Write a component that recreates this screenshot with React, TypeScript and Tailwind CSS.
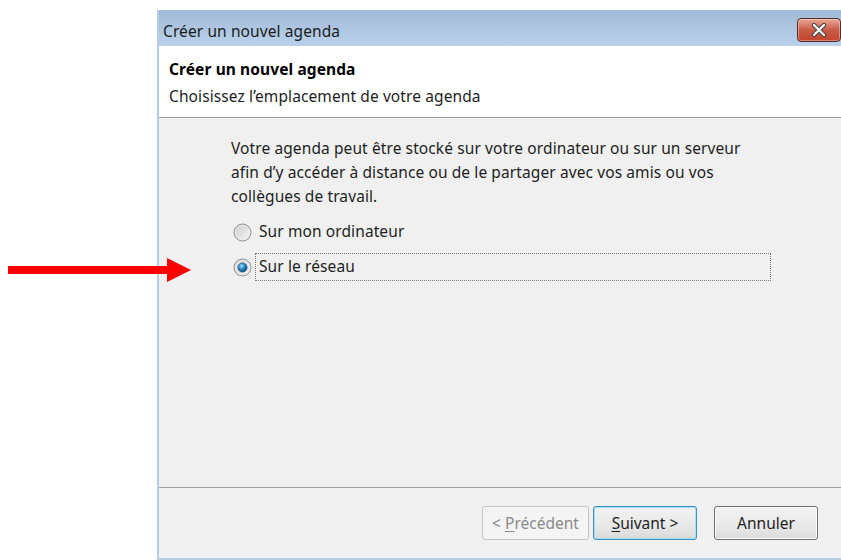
import React from "react";

const font = { fontFamily: '"Noto Sans", "Segoe UI", sans-serif' };

function Radio({ checked }: { checked?: boolean }) {
  return (
    <svg width="19" height="19" viewBox="0 0 19 19" className="shrink-0">
      <defs>
        <linearGradient id={checked ? "rg1" : "rg0"} x1="0" y1="0" x2="1" y2="1">
          <stop offset="0" stopColor="#cbcbcb" />
          <stop offset="1" stopColor="#f8f8f8" />
        </linearGradient>
        <radialGradient id="dot" cx="0.4" cy="0.35" r="0.7">
          <stop offset="0" stopColor="#a6e4ff" />
          <stop offset="0.45" stopColor="#2a8ccd" />
          <stop offset="1" stopColor="#0c3c6a" />
        </radialGradient>
      </defs>
      <circle cx="9.5" cy="9.5" r="8.5" fill={`url(#${checked ? "rg1" : "rg0"})`} stroke="#8e8f8f" strokeWidth="1" />
      <circle cx="9.5" cy="9.5" r="7" fill="none" stroke="#ececec" strokeWidth="1" />
      {checked && <circle cx="9.5" cy="9.5" r="4.6" fill="url(#dot)" stroke="#1a4d78" strokeWidth="0.6" />}
    </svg>
  );
}

function CloseButton() {
  return (
    <div className="w-[44px] h-[24px] rounded-[4px] border border-[#5a2a26] bg-gradient-to-b from-[#e9a796] via-[#c85b46] to-[#c4442d] flex items-center justify-center shadow-[inset_0_0_0_1px_rgba(255,255,255,0.35)]">
      <svg width="16" height="14" viewBox="0 0 16 14">
        <path d="M3 2 L13 12 M13 2 L3 12" stroke="#3a3a3a" strokeWidth="4.2" strokeLinecap="round" />
        <path d="M3 2 L13 12 M13 2 L3 12" stroke="#ffffff" strokeWidth="2.4" strokeLinecap="round" />
      </svg>
    </div>
  );
}

export default function App() {
  return (
    <div className="relative w-[841px] h-[560px] bg-white overflow-hidden" style={font}>
      <div className="ml-[157px] mt-[10px] w-[690px] h-[550px] flex flex-col border-l-2 border-[#b6cde6]">
        {/* title bar */}
        <div className="h-[36px] shrink-0 bg-gradient-to-b from-[#a1bad7] to-[#bad1ea] flex items-start justify-between pl-[4px] pr-[6px]">
          <span className="mt-[10px] text-[15.5px] leading-[22px] text-[#1b1b1b] tracking-[0.1px]">Créer un nouvel agenda</span>
          <div className="mt-[8px]">
            <CloseButton />
          </div>
        </div>
        {/* header */}
        <div className="h-[72px] shrink-0 bg-white border-b border-[#a0a0a0] pl-[10px] pt-[11px]">
          <div className="text-[15.5px] font-bold text-black leading-[24px] tracking-[0.1px]">Créer un nouvel agenda</div>
          <div className="text-[15.5px] text-[#1e1e1e] leading-[24px] mt-[3px] tracking-[0.1px]">Choisissez l’emplacement de votre agenda</div>
        </div>
        {/* body */}
        <div className="flex-1 bg-[#f0f0f0] pl-[72px] pt-[18px] border-b border-[#a0a0a0]">
          <p className="text-[15.5px] leading-[24px] text-[#1e1e1e] w-[560px] tracking-[0.1px]">
            Votre agenda peut être stocké sur votre ordinateur ou sur un serveur
            <br />
            afin d’y accéder à distance ou de le partager avec vos amis ou vos
            <br />
            collègues de travail.
          </p>
          <div className="mt-[10px] flex items-center gap-[7px] h-[28px] pl-[2px]">
            <Radio />
            <span className="text-[15.5px] text-[#1e1e1e] tracking-[0.1px]">Sur mon ordinateur</span>
          </div>
          <div className="mt-[7px] flex items-center gap-[3px] h-[28px] pl-[2px]">
            <Radio checked />
            <div className="w-[516px] h-[28px] border border-dotted border-[#7a7a7a] flex items-center pl-[3px]">
              <span className="text-[15.5px] text-[#1e1e1e] tracking-[0.1px]">Sur le réseau</span>
            </div>
          </div>
        </div>
        {/* footer */}
        <div className="h-[72px] shrink-0 bg-[#f0f0f0] flex items-start pt-[18px] pl-[323px] border-b-2 border-[#b6cde6]">
          <button className="w-[107px] h-[34px] pt-[2px] rounded-[3px] border border-[#c4c4c4] bg-[#f4f4f4] text-[15.5px] text-[#8a8a8a]">
            &lt; <span className="underline underline-offset-2">P</span>récédent
          </button>
          <button className="ml-[4px] w-[104px] h-[34px] pt-[2px] rounded-[3px] border border-[#3c8fc9] bg-gradient-to-b from-[#f2f2f2] via-[#eaeaea] to-[#dadada] shadow-[inset_0_0_0_1px_#a8dcf7] text-[15.5px] text-[#1e1e1e]">
            <span className="underline underline-offset-2">S</span>uivant &gt;
          </button>
          <button className="ml-[17px] w-[104px] h-[34px] pt-[2px] rounded-[3px] border border-[#707070] bg-gradient-to-b from-[#f2f2f2] via-[#ebebeb] to-[#dcdcdc] shadow-[inset_0_0_0_1px_#fcfcfc] text-[15.5px] text-[#1e1e1e]">
            Annuler
          </button>
        </div>
      </div>
      {/* red pointer arrow */}
      <svg className="absolute left-[8px] top-[257px]" width="184" height="26" viewBox="0 0 184 26">
        <rect x="0" y="9" width="162" height="8" fill="#ff0000" />
        <polygon points="159,1 183,13 159,25" fill="#ff0000" />
      </svg>
    </div>
  );
}
